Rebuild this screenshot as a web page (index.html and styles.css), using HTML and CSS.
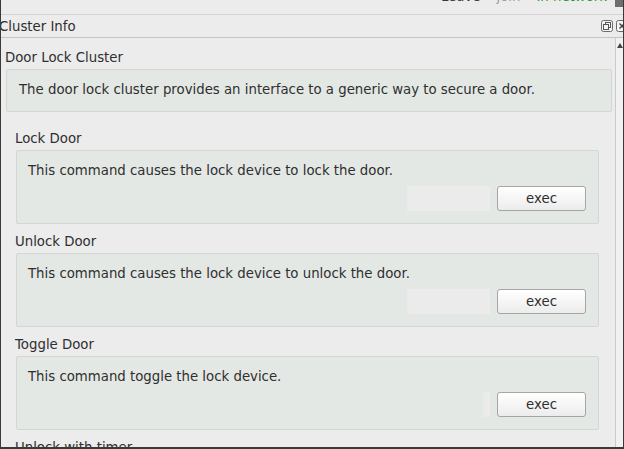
FILE: index.html
```
<!DOCTYPE html>
<html lang="en">
<head>
    <meta charset="UTF-8">
    <meta name="viewport" content="width=device-width, initial-scale=1.0">
    <title>Cluster Info</title>
    <link rel="stylesheet" href="styles.css">
</head>
<body>
    <div class="window">
        <div class="topbar">
            <div class="status">
                <span class="status-dark">Leave</span>
                <span class="status-gray">join</span>
                <span class="status-green">In network</span>
            </div>
            <div class="top-thumb"></div>
        </div>

        <div class="dock-title">
            <span class="dock-name">Cluster Info</span>
            <div class="dock-buttons">
                <span class="dock-btn">
                    <svg width="12" height="12" viewBox="0 0 12 12">
                        <rect x="0.5" y="0.5" width="11" height="11" rx="2" fill="#f4f4f4" stroke="#6a6a6a"/>
                        <rect x="4.5" y="2.5" width="5" height="5" fill="none" stroke="#555"/>
                        <rect x="2.5" y="4.5" width="5" height="5" fill="#f4f4f4" stroke="#555"/>
                    </svg>
                </span>
                <span class="dock-btn">
                    <svg width="12" height="12" viewBox="0 0 12 12">
                        <rect x="0.5" y="0.5" width="11" height="11" rx="2" fill="#f4f4f4" stroke="#6a6a6a"/>
                        <path d="M3.5 3.5 L8.5 8.5 M8.5 3.5 L3.5 8.5" stroke="#444" stroke-width="1.4"/>
                    </svg>
                </span>
            </div>
        </div>

        <div class="dock-body">
            <div class="scroll-area">
                <div class="cluster-name">Door Lock Cluster</div>
                <div class="desc-box">The door lock cluster provides an interface to a generic way to secure a door.</div>

                <div class="command">
                    <div class="command-name">Lock Door</div>
                    <div class="command-box">
                        <div class="command-text">This command causes the lock device to lock the door.</div>
                        <div class="command-actions">
                            <div class="arg-field"></div>
                            <button class="exec-btn">exec</button>
                        </div>
                    </div>
                </div>

                <div class="command">
                    <div class="command-name">Unlock Door</div>
                    <div class="command-box">
                        <div class="command-text">This command causes the lock device to unlock the door.</div>
                        <div class="command-actions">
                            <div class="arg-field"></div>
                            <button class="exec-btn">exec</button>
                        </div>
                    </div>
                </div>

                <div class="command">
                    <div class="command-name">Toggle Door</div>
                    <div class="command-box">
                        <div class="command-text">This command toggle the lock device.</div>
                        <div class="command-actions">
                            <div class="arg-field narrow"></div>
                            <button class="exec-btn">exec</button>
                        </div>
                    </div>
                </div>

                <div class="command">
                    <div class="command-name">Unlock with timer</div>
                </div>
            </div>
            <div class="scrollbar">
                <svg class="scroll-up" width="6" height="5" viewBox="0 0 6 5">
                    <path d="M0 5 L3 0 L6 5 Z" fill="#444"/>
                </svg>
            </div>
        </div>
    </div>
</body>
</html>
```

FILE: styles.css
```
html, body {
    margin: 0;
    height: 100%;
}
body {
    font-family: "DejaVu Sans", sans-serif;
    font-size: 13.3px;
    color: #2f2f2f;
    background-color: #ececec;
    overflow: hidden;
}
.window {
    height: 447px;
    border-left: 1px solid #3a3a3a;
    border-right: 1px solid #3a3a3a;
    border-bottom: 2px solid #3a3a3a;
    display: flex;
    flex-direction: column;
    overflow: hidden;
}
.topbar {
    height: 14px;
    flex-shrink: 0;
    border-bottom: 1px solid #d3d3d3;
    display: flex;
    justify-content: flex-end;
    overflow: hidden;
}
.status {
    margin-top: -11px;
    line-height: 16px;
    margin-right: 8px;
    display: flex;
    gap: 16px;
}
.status-dark {
    color: #3a3a3a;
}
.status-gray {
    color: #9a9a9a;
}
.status-green {
    color: #2a9a2a;
}
.top-thumb {
    width: 8px;
    height: 7px;
    background-color: #6e6e6e;
}
.dock-title {
    height: 22px;
    flex-shrink: 0;
    border-bottom: 1px solid #c3c3c3;
    display: flex;
    align-items: center;
    justify-content: space-between;
}
.dock-name {
    margin-left: -2px;
}
.dock-buttons {
    display: flex;
    gap: 3px;
    margin-right: -5px;
}
.dock-btn {
    display: flex;
}
.dock-body {
    flex: 1;
    display: flex;
    min-height: 0;
}
.scroll-area {
    flex: 1;
    padding: 11px 3px 0 4px;
    overflow: hidden;
}
.scrollbar {
    width: 7px;
    border-left: 1px solid #cbcbcb;
    background-color: #f1f1f1;
    display: flex;
    justify-content: flex-end;
}
.scroll-up {
    margin-top: 5px;
}
.cluster-name {
    line-height: 16px;
    padding-top: 1px;
    margin-bottom: 3px;
}
.desc-box {
    margin-left: 1px;
    padding: 12px 12px 13px 12px;
    line-height: 16px;
    background-color: #e4e8e5;
    border: 1px solid #d3d7d4;
    border-radius: 2px;
}
.command {
    margin: 18px 13px 0 10px;
}
.command + .command {
    margin-top: 9px;
}
.command-name {
    line-height: 16px;
    padding-top: 1px;
    margin-bottom: 3px;
}
.command-box {
    margin-left: 1px;
    padding: 12px 12px 12px 11px;
    background-color: #e4e8e5;
    border: 1px solid #d3d7d4;
    border-radius: 2px;
}
.command-text {
    line-height: 16px;
}
.command-actions {
    margin-top: 7px;
    display: flex;
    justify-content: flex-end;
    gap: 7px;
}
.arg-field {
    width: 83px;
    height: 25px;
    background-color: #ebebeb;
}
.arg-field.narrow {
    width: 7px;
}
.exec-btn {
    width: 89px;
    height: 25px;
    padding: 0;
    font-family: "DejaVu Sans", sans-serif;
    font-size: 13.3px;
    color: #2f2f2f;
    border: 1px solid #a5a5a5;
    border-radius: 3px;
    background: linear-gradient(#ffffff, #ececec);
}
```
